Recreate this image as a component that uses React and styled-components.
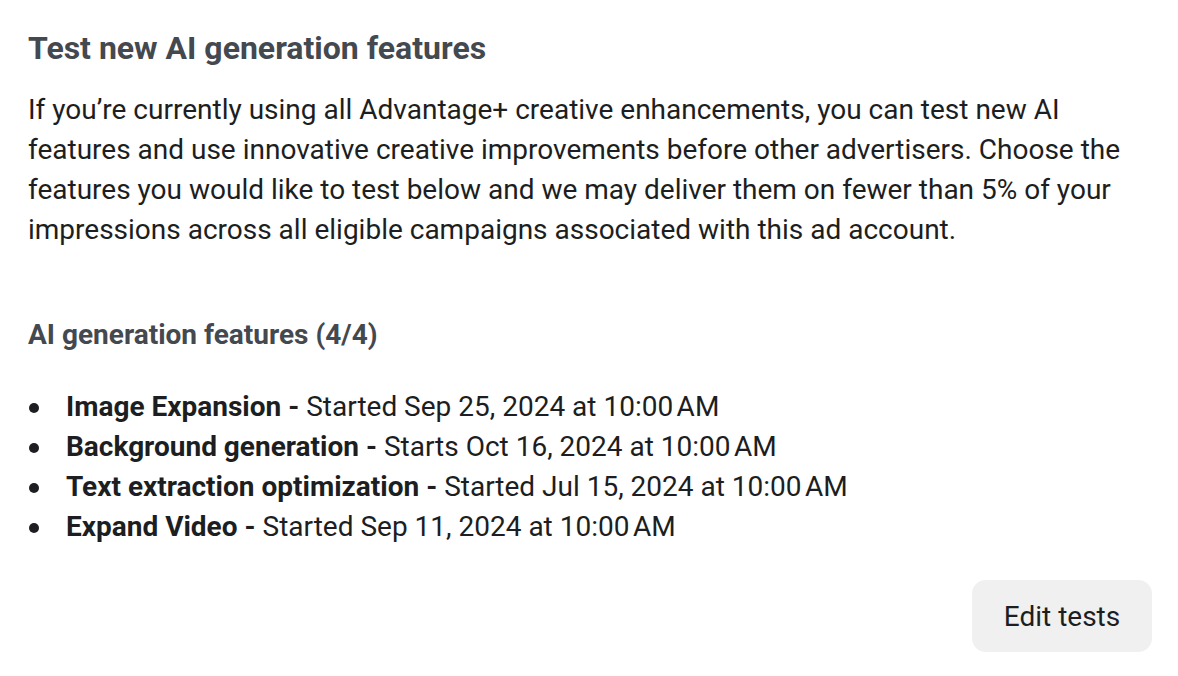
import React from "react"
import styled, {createGlobalStyle} from "styled-components"

const Global = createGlobalStyle`
  body {
    margin: 0;
    background: #ffffff;
    font-family: Roboto, "Liberation Sans", sans-serif;
  }
`

const Panel = styled.div`
  width: 1178px;
  box-sizing: border-box;
  padding: 28px 26px 0 28px;
  display: flex;
  flex-direction: column;
`

const Title = styled.h2`
  margin: 0;
  font-size: 32px;
  line-height: 40px;
  font-weight: 700;
  color: #444950;
`

const Body = styled.p`
  margin: 22px 0 0;
  font-size: 28px;
  line-height: 40px;
  color: #1c1e21;
  max-width: 1100px;
`

const SubTitle = styled.h3`
  margin: 65px 0 0;
  font-size: 28px;
  line-height: 40px;
  font-weight: 700;
  color: #444950;
`

const List = styled.ul`
  margin: 32px 0 0;
  padding: 0;
  list-style: none;
  font-size: 28px;
  line-height: 40px;
  color: #1c1e21;
`

const Item = styled.li`
  display: flex;
  align-items: center;
`

const Dot = styled.span`
  width: 10px;
  height: 10px;
  border-radius: 50%;
  background: #1c1e21;
  margin: 2px 27px 0 1px;
  flex-shrink: 0;
`

const Label = styled.strong`
  font-weight: 700;
  color: #1c1e21;
  white-space: pre;
`

const Footer = styled.div`
  display: flex;
  justify-content: flex-end;
  margin-top: 33px;
`

const Button = styled.button`
  width: 180px;
  height: 72px;
  border: none;
  border-radius: 14px;
  background: #f0f0f0;
  font-family: Roboto, "Liberation Sans", sans-serif;
  font-size: 28px;
  color: #1c1e21;
  cursor: pointer;
`

const features = [
  {name: "Image Expansion", when: "Started Sep 25, 2024 at 10:00\u202fAM"},
  {name: "Background generation", when: "Starts Oct 16, 2024 at 10:00\u202fAM"},
  {name: "Text extraction optimization", when: "Started Jul 15, 2024 at 10:00\u202fAM"},
  {name: "Expand Video", when: "Started Sep 11, 2024 at 10:00\u202fAM"},
]

export default function App() {
  return (
    <Panel>
      <Global />
      <Title>Test new AI generation features</Title>
      <Body>
        If you’re currently using all Advantage+ creative enhancements, you can test new AI
        features and use innovative creative improvements before other advertisers. Choose the
        features you would like to test below and we may deliver them on fewer than 5% of your
        impressions across all eligible campaigns associated with this ad account.
      </Body>
      <SubTitle>AI generation features (4/4)</SubTitle>
      <List>
        {features.map((f) => (
          <Item key={f.name}>
            <Dot />
            <span>
              <Label>{f.name} - </Label>{f.when}
            </span>
          </Item>
        ))}
      </List>
      <Footer>
        <Button>Edit tests</Button>
      </Footer>
    </Panel>
  )
}
